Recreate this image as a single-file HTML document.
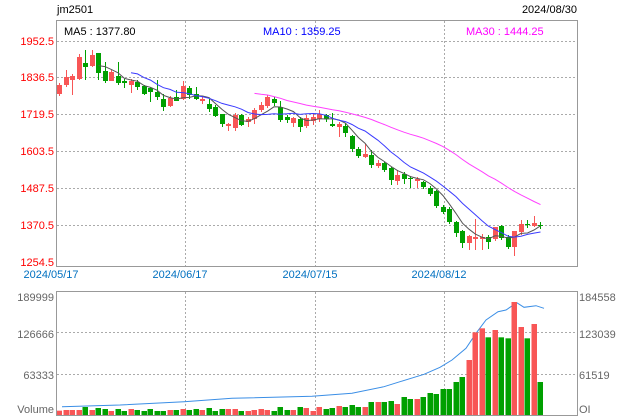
<!DOCTYPE html>
<html><head><meta charset="utf-8"><style>
body{margin:0;background:#fff;width:620px;height:420px;overflow:hidden}
svg{display:block;font-family:"Liberation Sans",Arial,sans-serif;font-size:11px}
</style></head><body>
<svg id="s" width="620" height="420" xmlns="http://www.w3.org/2000/svg">
<rect x="0" y="0" width="620" height="420" fill="#fff"/>
<g id="grid" stroke="#aaa" stroke-dasharray="2,2" stroke-width="1"></g>
<g id="cand"></g><g id="lines" fill="none"></g><g id="vol"></g>
<rect x="56.5" y="20.5" width="521" height="246" fill="none" stroke="#999"/>
<rect x="56.5" y="291.5" width="521" height="124" fill="none" stroke="#999"/>
<text x="57" y="13" fill="#000">jm2501</text>
<text x="577" y="13" fill="#000" text-anchor="end">2024/08/30</text>
<text x="64" y="35" fill="#000">MA5 : 1377.80</text>
<text x="263" y="35" fill="#0000ff">MA10 : 1359.25</text>
<text x="466" y="35" fill="#ff00ff">MA30 : 1444.25</text>
<g fill="#ff0000" text-anchor="end">
<text x="54" y="45">1952.5</text><text x="54" y="81">1836.5</text><text x="54" y="118">1719.5</text>
<text x="54" y="155">1603.5</text><text x="54" y="192">1487.5</text><text x="54" y="229">1370.5</text><text x="54" y="266">1254.5</text>
</g>
<g fill="#0070c0" text-anchor="middle">
<text x="51" y="278">2024/05/17</text><text x="180" y="278">2024/06/17</text><text x="310" y="278">2024/07/15</text><text x="439" y="278">2024/08/12</text>
</g>
<g fill="#666" text-anchor="end">
<text x="54" y="301">189999</text><text x="54" y="338">126666</text><text x="54" y="379">63333</text><text x="54" y="413">Volume</text>
</g>
<g fill="#666">
<text x="579" y="301">184558</text><text x="579" y="338">123039</text><text x="579" y="379">61519</text><text x="579" y="413">OI</text>
</g>
</svg>
<script>
var NS="http://www.w3.org/2000/svg";
function el(p,t,a){var e=document.createElementNS(NS,t);for(var k in a)e.setAttribute(k,a[k]);document.getElementById(p).appendChild(e);return e;}
[41,77.3,114,151.3,188.3,225.3].forEach(function(y){el("grid","line",{x1:57,x2:577,y1:Math.round(y)+.5,y2:Math.round(y)+.5});});
[332,374].forEach(function(y){el("grid","line",{x1:57,x2:577,y1:y+.5,y2:y+.5});});
[185.5,315.5,444.5].forEach(function(x){el("grid","line",{x1:x,x2:x,y1:21,y2:266});el("grid","line",{x1:x,x2:x,y1:292,y2:415});});
// [color, bodyTop, bodyBot, wickTop, wickBot]
var C=[
["r",85,94,83,96],["r",77,85,70,87],["r",76,80,74,95],["r",57,79,54,80],["g",63,67,50,80],
["r",55,66,50,67],["g",53,73,53,80],["g",71,81,62,83],["r",72,81,70,81],["g",76,83,62,85],
["g",81,83,79,88],["r",81,85,79,93],["g",82,87,80,90],["g",86,94,85,95],["g",88,92,87,102],
["g",92,97,80,100],["g",99,107,94,111],["r",98,106,96,107],["g",97,101,90,101],["r",86,99,81,100],
["g",88,95,86,99],["g",94,99,87,100],["r",99,101,96,104],["g",104,109,99,112],["g",107,116,105,117],
["g",114,124,114,127],["r",124,126,123,131],["r",115,128,113,131],["g",115,125,114,126],["r",119,122,117,127],
["r",110,119,108,124],["r",105,110,102,112],["r",97,106,95,108],["g",99,103,97,106],["g",107,120,101,122],
["g",117,120,115,123],["r",118,123,117,127],["g",119,127,117,132],["r",118,126,115,128],["r",117,121,113,125],
["r",114,119,110,122],["g",115,119,114,122],["g",124,126,113,127],["r",124,127,122,137],["g",126,133,123,137],
["g",136,149,135,152],["g",149,156,147,158],["r",154,157,144,158],["g",155,165,150,168],["r",163,166,160,168],
["g",163,170,162,172],["g",168,180,167,185],["r",175,181,170,185],["g",174,179,172,184],["g",178,179,176,188],
["r",179,181,177,188],["g",182,187,181,189],["g",188,194,186,196],["g",191,206,190,208],["g",207,212,205,214],
["g",209,222,207,224],["g",222,233,221,237],["g",231,243,230,248],["r",236,243,235,250],["r",237,239,219,250],
["r",237,239,234,250],["g",237,242,235,249],["r",227,239,227,241],["g",226,238,225,240],["g",237,247,235,249],
["r",231,247,231,256],["r",224,232,220,235],["g",224,225,220,228],["r",223,226,216,227],["g",225,226,222,229]];
var RED="#f85656",GRN="#00a000";
var n=C.length,x0=59,dx=(540-59)/(n-1);
var closes=[];
C.forEach(function(c,i){
 var x=Math.round(x0+i*dx),col=c[0]=="r"?RED:GRN;
 el("cand","line",{x1:x+.5,x2:x+.5,y1:c[3],y2:c[4],stroke:col});
 el("cand","rect",{x:x-2,y:c[1],width:5,height:Math.max(1,c[2]-c[1]),fill:col});
 closes.push(c[0]=="r"?c[1]:c[2]);
});
function ma(p,start,col){var pts=[];for(var i=start;i<n;i++){var s=0,k=0;for(var j=Math.max(0,i-p+1);j<=i;j++){s+=closes[j];k++;}pts.push((x0+i*dx+.5).toFixed(1)+","+(s/k).toFixed(1));}
 el("lines","polyline",{points:pts.join(" "),stroke:col,"stroke-width":1});}
ma(5,6,"#555");ma(10,11,"#3b3bff");ma(30,30,"#ff40ff");
var V=[392,390,390,390,381,390,384,387,393,387,393,387,390,393,387,393,393,390,390,387,390,387,390,384,393,387,387,387,393,393,390,387,390,393,381,390,390,381,384,393,381,387,384,378,381,375,381,381,366,366,366,363,372,351,357,357,351,339,342,327,327,306,291,240,157,145,172,150,172,175,66,141,175,132,306];
V.forEach(function(z,i){var x=Math.round(x0+i*dx),y=280+z/3;el("vol","rect",{x:x-2.5,y:y,width:5.5,height:415-y,fill:C[i][0]=="r"?RED:GRN});});
var OI=[[155,380],[300,375],[460,365],[580,355],[780,349],[880,340],[960,320],[1000,305],[1060,283],[1100,262],[1130,240],[1165,205],[1190,160],[1215,120],[1245,95],[1265,90],[1292,68],[1310,82],[1340,77],[1360,85]];
el("lines","polyline",{points:OI.map(function(p){return (p[0]/2.5).toFixed(1)+","+(280+p[1]/3).toFixed(1)}).join(" "),stroke:"#3a8ee6","stroke-width":1});
</script>
</body></html>
